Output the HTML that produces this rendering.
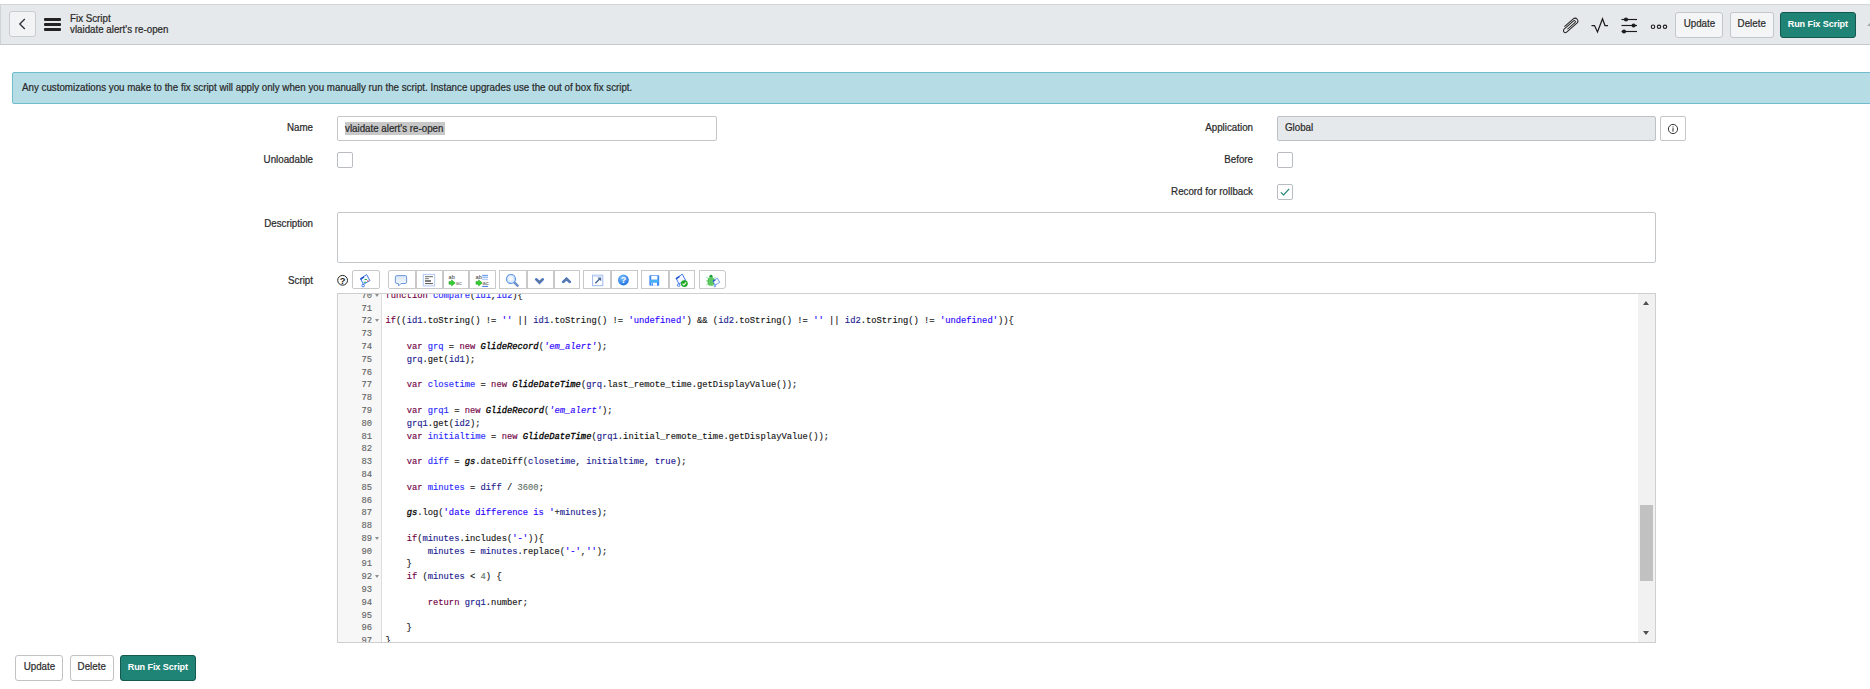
<!DOCTYPE html>
<html>
<head>
<meta charset="utf-8">
<title>Fix Script</title>
<style>
*{box-sizing:border-box;margin:0;padding:0}
html,body{width:1870px;height:689px;overflow:hidden;background:#fff}
body{font-family:"Liberation Sans",sans-serif;font-size:9.8px;color:#2a2a2a;position:relative;-webkit-text-stroke:0.22px #2a2a2a}
.abs{position:absolute}
.t{position:absolute;white-space:nowrap;line-height:12px;font-size:10.2px;transform:scaleX(0.958);transform-origin:0 50%;margin-top:-0.4px}
.r{text-align:right;transform-origin:100% 50% !important}
/* header */
#hdr{position:absolute;left:0;top:4px;width:1880px;height:41px;background:#e6e9eb;border-top:1px solid #d3d6d8;border-bottom:1px solid #c6c9cc;border-left:1px solid #d0d3d6}
.btn{position:absolute;height:26px;border:1px solid #c3c7ca;border-radius:3px;background:#f4f5f6;color:#2e2e2e;text-align:center;line-height:21.6px;font-size:9.8px;white-space:nowrap}
.bt{display:inline-block;font-size:10.2px;transform:scaleX(0.958);transform-origin:50% 50%}
.btn.p .bt{font-size:9.6px;transform:scaleX(0.948)}
.btn.w{background:#fff;border-color:#bfc3c6}
.btn.p{background:#1f8476;border-color:#14584f;color:#fff;font-weight:bold;font-size:9.1px;letter-spacing:-0.1px;-webkit-text-stroke:0;line-height:22.6px}
/* banner */
#ban{position:absolute;left:12px;top:72px;width:1870px;height:32px;background:#b6dde6;border:1px solid #6fbccd;border-radius:2px}
/* fields */
.inp{position:absolute;height:25px;border:1px solid #c3c7ca;border-radius:2px;background:#fff}
.cb{position:absolute;width:16px;height:16px;border:1px solid #b9bdc1;border-radius:2px;background:#fff}
/* toolbar */
.tb{position:absolute;top:270px;height:19px;border:1px solid #c9c9c9;border-radius:2px;background:#fff}
.tb i{position:absolute;top:0;width:1.5px;height:17px;background:#c9c9c9}
/* editor */
#ed{position:absolute;left:337px;top:293px;width:1319px;height:350px;border:1px solid #cfcfcf;background:#fff;overflow:hidden}
#gut{position:absolute;left:0;top:0;width:44px;height:348px;background:#f7f7f7;border-right:1px solid #ddd}
#sb{position:absolute;left:1300px;top:0;width:17px;height:348px;background:#f1f1f1}
#th{position:absolute;left:2px;top:211px;width:13px;height:76px;background:#c1c1c1}
.ln{-webkit-text-stroke:0.14px;position:absolute;left:0;width:1300px;height:12.8px;line-height:12.8px;font-family:"Liberation Mono",monospace;font-size:8.8px;white-space:pre;color:#222}
.no{position:absolute;left:0;width:34px;text-align:right;color:#666}
.fd{position:absolute;left:37.3px;top:3.9px;width:0;height:0;border-left:2px solid transparent;border-right:2px solid transparent;border-top:3.1px solid #8f8f8f}
.tx{position:absolute;left:47.5px}
.k{color:#720045}.d{color:#2a2aff}.v{color:#22228e}.s{color:#2a00ff}.si{color:#2a00ff;font-style:italic}
.n{color:#5f7269}.a{color:#221199}.g{color:#000;font-style:italic;-webkit-text-stroke:0.3px #000}.p{color:#161616}
</style>
</head>
<body>
<!-- header -->
<div id="hdr"></div>
<div class="abs" style="left:9px;top:11px;width:27px;height:26px;border:1px solid #c9cdd0;border-radius:3px;background:#f2f3f5"></div>
<svg class="abs" style="left:17px;top:17px" width="10" height="14" viewBox="0 0 10 14"><path d="M7.8 2 L2.8 7 L7.8 12" fill="none" stroke="#2a2f38" stroke-width="1.3"/></svg>
<div class="abs" style="left:44px;top:18px;width:17px;height:3px;background:#222;border-radius:1px"></div>
<div class="abs" style="left:44px;top:23px;width:17px;height:3px;background:#222;border-radius:1px"></div>
<div class="abs" style="left:44px;top:28px;width:17px;height:3px;background:#222;border-radius:1px"></div>
<div class="t" id="t1" style="left:70px;top:13.4px">Fix Script</div>
<div class="t" id="t2" style="left:70px;top:24px">vlaidate alert's re-open</div>

<!-- header icons -->
<svg class="abs" style="left:1560px;top:15px" width="22" height="22" viewBox="0 0 22 22"><g fill="none" stroke="#222" stroke-width="1.05"><g transform="translate(10.1 10.4) rotate(229) scale(0.92)"><path d="M3 -5.5 V7.2 A3 3 0 0 1 -3 7.2 V-7.6 A2.1 2.1 0 0 1 1.2 -7.6 V6 A1.2 1.2 0 0 1 -1.2 6 V-5"/></g></g></svg>
<svg class="abs" style="left:1590px;top:16px" width="20" height="20" viewBox="0 0 20 20"><path d="M1.5 9.5 H4.5 L7.5 16 L12.5 2.8 L15 9.5 H18" fill="none" stroke="#1c1c1c" stroke-width="1.25"/></svg>
<svg class="abs" style="left:1620px;top:16px" width="20" height="20" viewBox="0 0 20 20"><g stroke="#1c1c1c" stroke-width="1.15" fill="#1c1c1c"><path d="M1.5 3.5 H17"/><path d="M1.5 9.5 H17"/><path d="M1.5 15.5 H17"/><circle cx="6" cy="3.5" r="1.5"/><circle cx="13.6" cy="9.5" r="1.5"/><circle cx="4" cy="15.5" r="1.5"/></g></svg>
<svg class="abs" style="left:1649px;top:21.5px" width="20" height="10" viewBox="0 0 20 10"><g fill="none" stroke="#1c1c1c" stroke-width="1.1"><circle cx="4" cy="4.8" r="1.75"/><circle cx="10" cy="4.8" r="1.7"/><circle cx="16" cy="4.8" r="1.7"/></g></svg>

<div class="btn" style="left:1675px;top:12px;width:48px"><span class="bt">Update</span></div>
<div class="btn" style="left:1730px;top:12px;width:44px"><span class="bt">Delete</span></div>
<div class="btn p" style="left:1780px;top:12px;width:76px"><span class="bt">Run Fix Script</span></div>
<div class="abs" style="left:1866.5px;top:22px;width:0;height:0;border-left:4px solid transparent;border-bottom:4px solid #a6a6a6"></div>

<!-- banner -->
<div id="ban"></div>
<div class="t" id="t3" style="left:21.5px;top:82px">Any customizations you make to the fix script will apply only when you manually run the script. Instance upgrades use the out of box fix script.</div>

<!-- left fields -->
<div class="t r" style="left:113px;width:200px;top:122px">Name</div>
<div class="inp" style="left:337px;top:116px;width:380px"></div>
<div class="abs" style="left:345px;top:122px;width:100px;height:13px;background:#c8c8c8"></div>
<div class="t" id="t4" style="left:345px;top:123px">vlaidate alert's re-open</div>
<div class="t r" style="left:113px;width:200px;top:154px">Unloadable</div>
<div class="cb" style="left:337px;top:152px"></div>
<div class="t r" style="left:113px;width:200px;top:218px">Description</div>
<div class="inp" style="left:337px;top:212px;width:1319px;height:51px"></div>
<div class="t r" style="left:113px;width:200px;top:275.6px">Script</div>

<!-- right fields -->
<div class="t r" style="left:1053px;width:200px;top:122px">Application</div>
<div class="inp" style="left:1277px;top:116px;width:379px;background:#e6e9eb;border-color:#bdc1c5"></div>
<div class="t" style="left:1285px;top:122.6px">Global</div>
<div class="inp" style="left:1660px;top:116px;width:26px"></div>
<svg class="abs" style="left:1667px;top:123px" width="12" height="12" viewBox="0 0 12 12"><circle cx="6" cy="6" r="4.6" fill="none" stroke="#222" stroke-width="0.9"/><rect x="5.5" y="5.2" width="1" height="3.4" fill="#222"/><rect x="5.5" y="3.4" width="1" height="1" fill="#222"/></svg>
<div class="t r" style="left:1053px;width:200px;top:154px">Before</div>
<div class="cb" style="left:1277px;top:152px"></div>
<div class="t r" style="left:1053px;width:200px;top:186px">Record for rollback</div>
<div class="cb" style="left:1277px;top:184px"></div>
<svg class="abs" style="left:1279px;top:186px" width="12" height="12" viewBox="0 0 12 12"><path d="M1.8 6.3 L4.6 9 L10.2 2.8" fill="none" stroke="#1f8476" stroke-width="1.15"/></svg>

<!-- toolbar -->
<svg class="abs" style="left:336px;top:273px" width="14" height="14" viewBox="0 0 14 14"><circle cx="6.6" cy="7.3" r="4.9" fill="#fff" stroke="#222" stroke-width="1"/><text x="6.7" y="10.6" font-size="9.4" font-family="Liberation Sans" font-weight="bold" text-anchor="middle" fill="#222" style="-webkit-text-stroke:0">?</text></svg>
<div class="tb" style="left:352px;width:28px"></div>
<div class="tb" style="left:388px;width:108px;border-radius:2px 0 0 2px"><i style="left:26px"></i><i style="left:53px"></i><i style="left:79px"></i></div>
<div class="tb" style="left:499px;width:81px;border-radius:0"><i style="left:26px"></i><i style="left:53px"></i></div>
<div class="tb" style="left:583px;width:55px;border-radius:0"><i style="left:26px"></i></div>
<div class="tb" style="left:641px;width:54px;border-radius:0"><i style="left:26px"></i></div>
<div class="tb" style="left:699px;width:27px;border-radius:0 3px 3px 0"></div>
<!--ICONS_START-->
<svg class="abs" style="left:330px;top:266px;-webkit-text-stroke:0" width="410" height="27" viewBox="330 266 410 27" font-family="Liberation Sans">
<defs>
<linearGradient id="gb" x1="0" y1="0" x2="0" y2="1"><stop offset="0" stop-color="#d6e4f8"/><stop offset="1" stop-color="#ffffff"/></linearGradient>
<radialGradient id="gm" cx="0.45" cy="0.45" r="0.6"><stop offset="0" stop-color="#ffffff"/><stop offset="1" stop-color="#c4dcf8"/></radialGradient>
<radialGradient id="gh" cx="0.4" cy="0.3" r="0.8"><stop offset="0" stop-color="#7cc0ff"/><stop offset="1" stop-color="#1668dc"/></radialGradient>
<linearGradient id="gg" x1="0" y1="0" x2="1" y2="0"><stop offset="0" stop-color="#2cb52c"/><stop offset="0.5" stop-color="#8be08b"/><stop offset="1" stop-color="#2cb52c"/></linearGradient>
</defs>
<!-- 1 script -->
<g transform="translate(365 280.6)"><path d="M-4.5 -1.9 L1.7 -6 L4.9 0 L-1.6 3.8 Z" fill="#f4f7ff" stroke="#3a72ea" stroke-width="0.95" stroke-linejoin="round"/><path d="M-5 -1.8 L-1.4 -4.4 L-0.7 -3.1 L-4.1 -0.6 Z" fill="#1b4fd0"/><circle cx="-1.9" cy="5" r="1.25" fill="#fff" stroke="#3a72ea" stroke-width="0.95"/></g>
<path d="M364.6 279.5 h2.4 M363.8 282.3 h2.2" stroke="#22b14c" stroke-width="1.1"/>
<rect x="367.1" y="280.3" width="1.3" height="1.3" fill="#f05050"/>
<!-- 2 bubble -->
<path d="M396.9 275.6 H405.1 Q406.6 275.6 406.6 277.1 V282 Q406.6 283.5 405.1 283.5 H401 L398.5 286 L398.3 283.5 H396.9 Q395.4 283.5 395.4 282 V277.1 Q395.4 275.6 396.9 275.6 Z" fill="url(#gb)" stroke="#5b8fd6" stroke-width="0.9" stroke-linejoin="round"/>
<!-- 3 text box -->
<rect x="423.3" y="274.4" width="11.4" height="11.5" fill="#fff" stroke="#b3c8f4" stroke-width="1"/>
<path d="M425 276.7 H433" stroke="#666" stroke-width="1"/>
<path d="M425 278.7 H428.8" stroke="#777" stroke-width="1"/>
<path d="M425 281 H431" stroke="#555" stroke-width="1.5"/>
<path d="M425 283.6 H433" stroke="#555" stroke-width="1"/>
<!-- 4 replace -->
<text x="448.6" y="278.6" font-size="5.6" fill="#333">ab</text>
<path d="M449 281.6 H451.6 V279.9 L455.2 282.9 L451.6 285.9 V284.2 H449 Z" fill="#35cf35" stroke="#1fa51f" stroke-width="0.6"/>
<text x="455.8" y="285.4" font-size="5.8" fill="#777">ac</text>
<!-- 5 replace all -->
<text x="475.6" y="278.6" font-size="5.6" fill="#333">ab</text>
<path d="M476 281.6 H478.6 V279.9 L482.2 282.9 L478.6 285.9 V284.2 H476 Z" fill="#35cf35" stroke="#1fa51f" stroke-width="0.6"/>
<rect x="482.2" y="274.8" width="5.8" height="1.5" fill="#6fa3ee"/>
<rect x="482.2" y="277.1" width="5.8" height="1.1" fill="#8fb6f1"/>
<rect x="482.2" y="279" width="5.8" height="1.1" fill="#b9d0f6"/>
<text x="482.6" y="285.4" font-size="5.8" fill="#555">ac</text>
<rect x="482.2" y="285.9" width="5.8" height="1" fill="#3c78e8"/>
<!-- 6 magnifier -->
<path d="M514.4 282.6 L517.6 285.7" stroke="#6a7f9f" stroke-width="2.4" stroke-linecap="round"/>
<path d="M514.4 282.6 L517.5 285.6" stroke="#6aa0ec" stroke-width="1.1" stroke-linecap="round"/>
<circle cx="511" cy="279" r="4.5" fill="url(#gm)" stroke="#5b96e3" stroke-width="1.2"/>
<!-- 7 chevron down -->
<path d="M536.3 279.4 L539.5 282.5 L542.7 279.4" fill="none" stroke="#2f6fd8" stroke-width="2.7" stroke-linejoin="miter" stroke-linecap="round"/>
<path d="M536.3 279.4 L539.5 282.5 L542.7 279.4" fill="none" stroke="#707a88" stroke-width="1.3" stroke-linecap="round"/>
<!-- 8 chevron up -->
<path d="M563.3 281.9 L566.5 278.8 L569.7 281.9" fill="none" stroke="#2f6fd8" stroke-width="2.7" stroke-linejoin="miter" stroke-linecap="round"/>
<path d="M563.3 281.9 L566.5 278.8 L569.7 281.9" fill="none" stroke="#707a88" stroke-width="1.3" stroke-linecap="round"/>
<!-- 9 popout -->
<rect x="592.6" y="275.2" width="10.2" height="10.5" fill="#fff" stroke="#9db8f2" stroke-width="1"/>
<rect x="593.1" y="275.7" width="9.2" height="1.3" fill="#d7e3fa"/>
<path d="M595.4 283.2 L600 278.4" stroke="#4d6c9c" stroke-width="1.5"/>
<path d="M597.4 277.4 H601.2 V281.2 Z" fill="#4d6c9c"/>
<!-- 10 help -->
<circle cx="623.4" cy="280" r="5.4" fill="url(#gh)"/>
<text x="623.4" y="283.3" font-size="9" font-weight="bold" fill="#fff" text-anchor="middle">?</text>
<!-- 11 save -->
<rect x="649.4" y="275.3" width="9.8" height="10.5" rx="0.8" fill="#3c8af5"/>
<rect x="651.2" y="275.9" width="6.2" height="3.8" fill="#fff"/>
<rect x="650.2" y="279.8" width="8.2" height="2.7" fill="#45b2f8"/>
<rect x="651.4" y="282.7" width="5.6" height="3.1" fill="#f4f8ff"/>
<rect x="651.9" y="283.1" width="1" height="2.7" fill="#3c8af5"/>
<!-- 12 script check -->
<g transform="translate(680.6 280.2)"><path d="M-4.5 -1.9 L1.7 -6 L4.9 0 L-1.6 3.8 Z" fill="#f4f7ff" stroke="#3a72ea" stroke-width="0.95" stroke-linejoin="round"/><path d="M-5 -1.8 L-1.4 -4.4 L-0.7 -3.1 L-4.1 -0.6 Z" fill="#1b4fd0"/><circle cx="-1.9" cy="5" r="1.25" fill="#fff" stroke="#3a72ea" stroke-width="0.95"/></g>
<circle cx="684.4" cy="283.6" r="3.4" fill="#1fa81f"/>
<path d="M682.6 283.7 L683.9 285 L686.2 282.3" fill="none" stroke="#fff" stroke-width="1.1"/>
<!-- 13 bug -->
<path d="M706.2 277 L709 279 M706 280.8 H708.5 M706.2 285 L709 283 M715.8 277 L713 279 M716 280.8 H713.5" stroke="#7fd88f" stroke-width="0.9" fill="none"/>
<circle cx="711" cy="276.5" r="1.7" fill="#1e9e3a"/>
<ellipse cx="711" cy="281.4" rx="3.4" ry="4.5" fill="url(#gg)"/>
<path d="M711 277 V285.2" stroke="#1e9e3a" stroke-width="0.7"/>
<g transform="translate(716.2 282.4) scale(0.72)"><path d="M-4.5 -1.9 L1.7 -6 L4.9 0 L-1.6 3.8 Z" fill="#f4f7ff" stroke="#3a72ea" stroke-width="0.95" stroke-linejoin="round"/><path d="M-5 -1.8 L-1.4 -4.4 L-0.7 -3.1 L-4.1 -0.6 Z" fill="#1b4fd0"/><circle cx="-1.9" cy="5" r="1.25" fill="#fff" stroke="#3a72ea" stroke-width="0.95"/></g>
</svg>
<!--ICONS_END-->

<!-- editor -->
<div id="ed">
<div id="gut"></div>
<div class="ln" style="top:-4.120px"><span class="no">70</span><i class="fd"></i><span class="tx"><span class="k">function</span><span class="p"> </span><span class="d">compare</span><span class="p">(</span><span class="d">id1</span><span class="p">,</span><span class="d">id2</span><span class="p">){</span></span></div>
<div class="ln" style="top:8.670px"><span class="no">71</span><span class="tx"></span></div>
<div class="ln" style="top:21.460px"><span class="no">72</span><i class="fd"></i><span class="tx"><span class="k">if</span><span class="p">((</span><span class="v">id1</span><span class="p">.toString() != </span><span class="s">''</span><span class="p"> || </span><span class="v">id1</span><span class="p">.toString() != </span><span class="s">'undefined'</span><span class="p">) &amp;&amp; (</span><span class="v">id2</span><span class="p">.toString() != </span><span class="s">''</span><span class="p"> || </span><span class="v">id2</span><span class="p">.toString() != </span><span class="s">'undefined'</span><span class="p">)){</span></span></div>
<div class="ln" style="top:34.250px"><span class="no">73</span><span class="tx"></span></div>
<div class="ln" style="top:47.040px"><span class="no">74</span><span class="tx"><span class="p">    </span><span class="k">var</span><span class="p"> </span><span class="d">grq</span><span class="p"> = </span><span class="k">new</span><span class="p"> </span><span class="g">GlideRecord</span><span class="p">(</span><span class="si">'em_alert'</span><span class="p">);</span></span></div>
<div class="ln" style="top:59.830px"><span class="no">75</span><span class="tx"><span class="p">    </span><span class="v">grq</span><span class="p">.get(</span><span class="v">id1</span><span class="p">);</span></span></div>
<div class="ln" style="top:72.620px"><span class="no">76</span><span class="tx"></span></div>
<div class="ln" style="top:85.410px"><span class="no">77</span><span class="tx"><span class="p">    </span><span class="k">var</span><span class="p"> </span><span class="d">closetime</span><span class="p"> = </span><span class="k">new</span><span class="p"> </span><span class="g">GlideDateTime</span><span class="p">(</span><span class="v">grq</span><span class="p">.last_remote_time.getDisplayValue());</span></span></div>
<div class="ln" style="top:98.200px"><span class="no">78</span><span class="tx"></span></div>
<div class="ln" style="top:110.990px"><span class="no">79</span><span class="tx"><span class="p">    </span><span class="k">var</span><span class="p"> </span><span class="d">grq1</span><span class="p"> = </span><span class="k">new</span><span class="p"> </span><span class="g">GlideRecord</span><span class="p">(</span><span class="si">'em_alert'</span><span class="p">);</span></span></div>
<div class="ln" style="top:123.780px"><span class="no">80</span><span class="tx"><span class="p">    </span><span class="v">grq1</span><span class="p">.get(</span><span class="v">id2</span><span class="p">);</span></span></div>
<div class="ln" style="top:136.570px"><span class="no">81</span><span class="tx"><span class="p">    </span><span class="k">var</span><span class="p"> </span><span class="d">initialtime</span><span class="p"> = </span><span class="k">new</span><span class="p"> </span><span class="g">GlideDateTime</span><span class="p">(</span><span class="v">grq1</span><span class="p">.initial_remote_time.getDisplayValue());</span></span></div>
<div class="ln" style="top:149.360px"><span class="no">82</span><span class="tx"></span></div>
<div class="ln" style="top:162.150px"><span class="no">83</span><span class="tx"><span class="p">    </span><span class="k">var</span><span class="p"> </span><span class="d">diff</span><span class="p"> = </span><span class="g">gs</span><span class="p">.dateDiff(</span><span class="v">closetime</span><span class="p">, </span><span class="v">initialtime</span><span class="p">, </span><span class="a">true</span><span class="p">);</span></span></div>
<div class="ln" style="top:174.940px"><span class="no">84</span><span class="tx"></span></div>
<div class="ln" style="top:187.730px"><span class="no">85</span><span class="tx"><span class="p">    </span><span class="k">var</span><span class="p"> </span><span class="d">minutes</span><span class="p"> = </span><span class="v">diff</span><span class="p"> / </span><span class="n">3600</span><span class="p">;</span></span></div>
<div class="ln" style="top:200.520px"><span class="no">86</span><span class="tx"></span></div>
<div class="ln" style="top:213.310px"><span class="no">87</span><span class="tx"><span class="p">    </span><span class="g">gs</span><span class="p">.log(</span><span class="s">'date difference is '</span><span class="p">+</span><span class="v">minutes</span><span class="p">);</span></span></div>
<div class="ln" style="top:226.100px"><span class="no">88</span><span class="tx"></span></div>
<div class="ln" style="top:238.890px"><span class="no">89</span><i class="fd"></i><span class="tx"><span class="p">    </span><span class="k">if</span><span class="p">(</span><span class="v">minutes</span><span class="p">.includes(</span><span class="s">'-'</span><span class="p">)){</span></span></div>
<div class="ln" style="top:251.680px"><span class="no">90</span><span class="tx"><span class="p">        </span><span class="v">minutes</span><span class="p"> = </span><span class="v">minutes</span><span class="p">.replace(</span><span class="s">'-'</span><span class="p">,</span><span class="s">''</span><span class="p">);</span></span></div>
<div class="ln" style="top:264.470px"><span class="no">91</span><span class="tx"><span class="p">    }</span></span></div>
<div class="ln" style="top:277.260px"><span class="no">92</span><i class="fd"></i><span class="tx"><span class="p">    </span><span class="k">if</span><span class="p"> (</span><span class="v">minutes</span><span class="p"> &lt; </span><span class="n">4</span><span class="p">) {</span></span></div>
<div class="ln" style="top:290.050px"><span class="no">93</span><span class="tx"></span></div>
<div class="ln" style="top:302.840px"><span class="no">94</span><span class="tx"><span class="p">        </span><span class="k">return</span><span class="p"> </span><span class="v">grq1</span><span class="p">.number;</span></span></div>
<div class="ln" style="top:315.630px"><span class="no">95</span><span class="tx"></span></div>
<div class="ln" style="top:328.420px"><span class="no">96</span><span class="tx"><span class="p">    }</span></span></div>
<div class="ln" style="top:341.210px"><span class="no">97</span><span class="tx"><span class="p">}</span></span></div>
<div id="sb"><div id="th"></div>
<div class="abs" style="left:5px;top:7px;width:0;height:0;border-left:3.5px solid transparent;border-right:3.5px solid transparent;border-bottom:4px solid #505050"></div>
<div class="abs" style="left:5px;top:337px;width:0;height:0;border-left:3.5px solid transparent;border-right:3.5px solid transparent;border-top:4px solid #505050"></div>
</div>
</div>

<!-- bottom buttons -->
<div class="btn w" style="left:15px;top:655px;width:48px"><span class="bt">Update</span></div>
<div class="btn w" style="left:70px;top:655px;width:44px"><span class="bt">Delete</span></div>
<div class="btn p" style="left:120px;top:655px;width:76px"><span class="bt">Run Fix Script</span></div>
</body>
</html>
